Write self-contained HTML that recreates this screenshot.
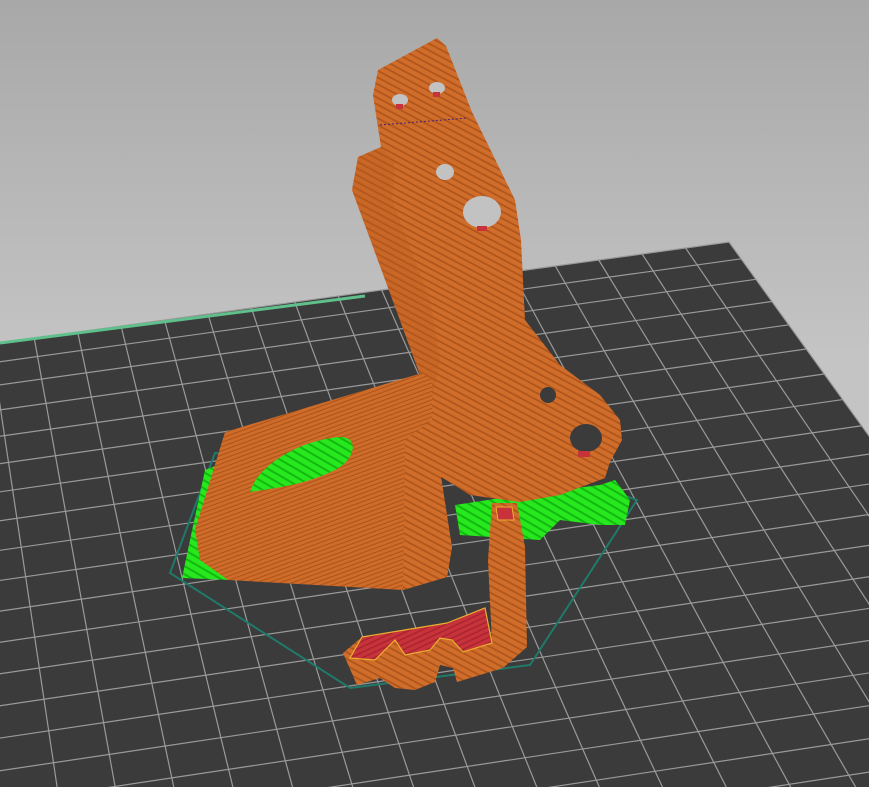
<!DOCTYPE html>
<html><head><meta charset="utf-8"><style>
html,body{margin:0;padding:0;width:869px;height:787px;overflow:hidden;background:#c0c0c0}
svg{display:block}
</style></head><body>
<svg id="s" width="869" height="787" viewBox="0 0 869 787" xmlns="http://www.w3.org/2000/svg">
<defs>
<linearGradient id="bg" x1="0" y1="0" x2="0" y2="1">
<stop offset="0" stop-color="#a8a8a8"/><stop offset="0.45" stop-color="#c4c4c4"/><stop offset="1" stop-color="#c8c8c8"/>
</linearGradient>
<pattern id="st" width="6" height="6" patternUnits="userSpaceOnUse" patternTransform="rotate(28)">
<rect width="6" height="6" fill="#d06d2a"/><rect y="4.2" width="6" height="1.8" fill="#b0561c"/>
</pattern>
<pattern id="st2" width="4" height="4" patternUnits="userSpaceOnUse" patternTransform="rotate(-20)">
<rect width="4" height="4" fill="#cf6c29"/><rect y="2.9" width="4" height="1.1" fill="#ad541b"/>
</pattern>
<pattern id="gr" width="7" height="7" patternUnits="userSpaceOnUse" patternTransform="rotate(30)">
<rect width="7" height="7" fill="#26e81c"/><rect y="5" width="7" height="2" fill="#14b812"/>
</pattern>
<pattern id="rd" width="5" height="5" patternUnits="userSpaceOnUse" patternTransform="rotate(-25)">
<rect width="5" height="5" fill="#c8323a"/><rect y="3.5" width="5" height="1.5" fill="#a82530"/>
</pattern>
</defs>
<rect width="869" height="787" fill="url(#bg)"/>
<polygon points="-400,398 729,242 1289,1018 -500,1300" fill="#3b3b3b"/>
<g id="grid" stroke="#9a9a9a" stroke-width="1.2" fill="none"></g>
<line x1="0" y1="343" x2="365" y2="296" stroke="#5fc08c" stroke-width="3"/>
<!-- skirt -->
<polygon points="215,453 170,573 350,688 530,665 637,500 617,493" fill="none" stroke="#1f7a6a" stroke-width="2"/>
<!-- green supports -->
<polygon points="205,470 230,460 215,540 230,580 182,578 190,540" fill="url(#gr)"/>
<polygon points="455,505 520,495 600,485 615,480 630,500 625,525 600,525 560,520 540,540 460,535" fill="url(#gr)"/>
<!-- tall arm -->
<polygon points="378,70 437,38 446,46 472,112 515,200 521,240 525,320 560,365 600,395 620,420 622,440 610,462 605,478 560,495 520,502 470,495 430,470 430,410 420,375 398,315 352,190 358,157 381,147 373,95" fill="url(#st)"/>
<polygon points="352,190 358,157 381,147 395,160 392,200 430,300 440,360 430,410 420,375 398,315" fill="#b85b20" opacity="0.3"/>
<ellipse cx="400" cy="100" rx="8" ry="6" fill="#c2c2c2"/><ellipse cx="437" cy="88" rx="8" ry="6" fill="#c2c2c2"/>
<rect x="396" y="104" width="7" height="5" fill="#c8323a"/><rect x="433" y="92" width="7" height="5" fill="#c8323a"/>
<ellipse cx="445" cy="172" rx="9" ry="8" fill="#c2c2c2"/>
<ellipse cx="482" cy="212" rx="19" ry="16" fill="#c2c2c2"/><rect x="477" y="226" width="10" height="5" fill="#c8323a"/>
<ellipse cx="548" cy="395" rx="8" ry="8" fill="#3b3b3b"/>
<ellipse cx="586" cy="438" rx="16" ry="14" fill="#3b3b3b"/><rect x="578" y="451" width="12" height="6" fill="#c8323a"/>
<line x1="380" y1="125" x2="468" y2="118" stroke="#402080" stroke-width="1" stroke-dasharray="2,2"/>
<!-- base plate -->
<polygon points="225,432 422,373 432,380 432,420 405,440 452,547 447,577 403,590 228,580 200,560 195,530" fill="url(#st2)"/>
<polygon points="405,440 432,420 440,470 452,547 447,577 403,590" fill="url(#st)"/>
<path d="M250,492 C258,465 300,440 340,437 C360,437 355,460 335,470 C305,485 275,488 250,492 Z" fill="url(#gr)"/>
<!-- small bracket -->
<polygon points="343,653 362,637 447,623 485,608 492,643 503,668 457,682 453,668 440,665 435,682 415,690 395,688 380,678 357,685" fill="url(#st)"/>
<polygon points="492,503 517,503 525,547 527,647 503,668 492,643 488,560" fill="url(#st)"/>
<polygon points="362,637 447,623 485,608 492,643 463,652 452,640 440,638 430,650 405,655 395,640 375,660 350,658" fill="url(#rd)" stroke="#e8b030" stroke-width="1.2"/>
<polygon points="496,507 512,507 514,520 498,520" fill="#c8323a" stroke="#e8b030" stroke-width="1"/>
</svg>
<script>
(function(){
var g=document.getElementById('grid');
var A=[-400,398],B=[729,242],C=[1289,1018],D=[-500,1300];
function P(u,v){var x=(1-u)*(1-v)*A[0]+u*(1-v)*B[0]+u*v*C[0]+(1-u)*v*D[0];
var y=(1-u)*(1-v)*A[1]+u*(1-v)*B[1]+u*v*C[1]+(1-u)*v*D[1];return [x,y];}
var nu=26,nv=28,s='';
function wv(v){return Math.pow(v,1.15);}
for(var i=0;i<=nu;i++){var u=i/nu,p=P(u,0),q=P(u,1);
s+='<line x1="'+p[0]+'" y1="'+p[1]+'" x2="'+q[0]+'" y2="'+q[1]+'"/>';}
for(var j=0;j<=nv;j++){var v=wv(j/nv),p=P(0,v),q=P(1,v);
s+='<line x1="'+p[0]+'" y1="'+p[1]+'" x2="'+q[0]+'" y2="'+q[1]+'"/>';}
g.innerHTML=s;
})();
</script>
</body></html>
